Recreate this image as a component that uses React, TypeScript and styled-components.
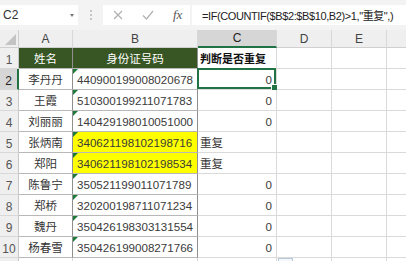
import React from "react";
import styled, { createGlobalStyle } from "styled-components";

const Global = createGlobalStyle`
  html, body { margin: 0; padding: 0; background: #ffffff; }
  body { font-family: "Noto Sans CJK SC", "Noto Sans", sans-serif; overflow: hidden; }
`;

const Page = styled.div`
  width: 406px;
  height: 261px;
  overflow: hidden;
  background: #ffffff;
  display: flex;
  flex-direction: column;
`;

const FormulaBar = styled.div`
  height: 30px;
  background: #f3f3f3;
  display: flex;
  align-items: flex-start;
  padding-top: 5px;
  box-sizing: border-box;
  flex-shrink: 0;
`;

const NameBox = styled.div`
  width: 78px;
  height: 20px;
  background: #ffffff;
  display: flex;
  align-items: center;
  justify-content: space-between;
  padding: 0 4px 0 3px;
  box-sizing: border-box;
  font-family: "Liberation Sans", sans-serif;
  font-size: 12px;
  color: #333;
`;

const Caret = styled.span`
  width: 0;
  height: 0;
  border-left: 2px solid transparent;
  border-right: 2px solid transparent;
  border-top: 3px solid #777;
`;

const Dots = styled.div`
  width: 25px;
  height: 20px;
  display: flex;
  flex-direction: column;
  align-items: center;
  justify-content: center;
  gap: 2px;
  & > span {
    width: 2px;
    height: 2px;
    background: #c4c4c4;
  }
`;

const IconBox = styled.div`
  width: 87px;
  height: 20px;
  background: #ffffff;
  display: flex;
  align-items: center;
  padding-left: 10px;
  gap: 19px;
  box-sizing: border-box;
`;

const Fx = styled.span`
  font-family: "Liberation Serif", serif;
  font-style: italic;
  font-size: 13px;
  color: #555;
`;

const FormulaText = styled.div`
  flex: 1;
  height: 20px;
  margin-left: 2px;
  background: #ffffff;
  display: flex;
  align-items: center;
  padding-left: 10px;
  font-family: "Liberation Sans", "Noto Sans CJK SC", sans-serif;
  font-size: 11px;
  letter-spacing: -0.4px;
  color: #222;
  white-space: nowrap;
  overflow: hidden;
`;

const Grid = styled.div`
  display: grid;
  grid-template-columns: 19px 54px 125px 79px 55px 55px 40px;
  grid-template-rows: 18px repeat(10, 21px) 20px;
`;

const ColHead = styled.div<{ $active?: boolean }>`
  background: ${(p) => (p.$active ? "#d6d6d6" : "#efefef")};
  border-right: 1px solid #d8d8d8;
  border-bottom: ${(p) => (p.$active ? "2px solid #217346" : "1px solid #d0d0d0")};
  box-sizing: border-box;
  display: flex;
  align-items: center;
  justify-content: center;
  font-family: "Liberation Sans", sans-serif;
  font-size: 12px;
  color: ${(p) => (p.$active ? "#222" : "#444")};
`;

const Corner = styled.div`
  background: #efefef;
  border-right: 1px solid #d0d0d0;
  border-bottom: 1px solid #d0d0d0;
  box-sizing: border-box;
  position: relative;
  &::after {
    content: "";
    position: absolute;
    right: 2px;
    bottom: 2px;
    width: 0;
    height: 0;
    border-left: 11px solid transparent;
    border-bottom: 11px solid #c3c3c3;
  }
`;

const RowHead = styled.div<{ $active?: boolean }>`
  background: ${(p) => (p.$active ? "#d6d6d6" : "#efefef")};
  border-right: ${(p) => (p.$active ? "2px solid #217346" : "1px solid #c8c8c8")};
  border-bottom: 1px solid #d8d8d8;
  box-sizing: border-box;
  display: flex;
  align-items: flex-end;
  justify-content: center;
  padding-bottom: 1px;
  font-family: "Liberation Sans", sans-serif;
  font-size: 12px;
  color: ${(p) => (p.$active ? "#222" : "#555")};
`;

const Cell = styled.div<{
  $bg?: string;
  $align?: "left" | "center" | "right";
  $table?: boolean;
  $bold?: boolean;
  $color?: string;
  $flag?: boolean;
  $pad?: number;
  $size?: number;
}>`
  position: relative;
  background: ${(p) => p.$bg || "#ffffff"};
  border-right: 1px solid ${(p) => (p.$table ? "#8f8f8f" : "#dadada")};
  border-bottom: 1px solid ${(p) => (p.$table ? "#b8b8b8" : "#dadada")};
  box-sizing: border-box;
  display: flex;
  align-items: center;
  justify-content: ${(p) =>
    p.$align === "center" ? "center" : p.$align === "right" ? "flex-end" : "flex-start"};
  padding: 0 4px 0 ${(p) => (p.$pad ?? 4)}px;
  font-size: ${(p) => p.$size ?? 11.5}px;
  font-weight: ${(p) => (p.$bold ? 700 : 400)};
  color: ${(p) => p.$color || "#333"};
  white-space: nowrap;
  overflow: visible;
  &::before {
    content: "";
    display: ${(p) => (p.$flag ? "block" : "none")};
    position: absolute;
    left: 0;
    top: 0;
    width: 0;
    height: 0;
    border-top: 5px solid #1f7a3a;
    border-right: 5px solid transparent;
  }
`;

const NumText = styled.span`
  font-family: "Liberation Sans", sans-serif;
  font-size: 11.6px;
  color: #3a3a3a;
`;

const Selected = styled.div`
  position: absolute;
  inset: -1px 0 0 -1px;
  border: 2px solid #217346;
  pointer-events: none;
  &::after {
    content: "";
    position: absolute;
    right: -4px;
    bottom: -4px;
    width: 5px;
    height: 5px;
    background: #217346;
    border: 1px solid #fff;
  }
`;

const Empty = styled.div`
  border-right: 1px solid #dadada;
  border-bottom: 1px solid #dadada;
  box-sizing: border-box;
  position: relative;
`;

const PasteIcon = styled.div`
  position: absolute;
  left: 1px;
  top: 0;
  width: 15px;
  height: 14px;
  border: 1px solid #b9c9d9;
  background: #f4f8fc;
  box-sizing: border-box;
`;

const rows = [
  { name: "李丹丹", id: "440900199008020678", c: "0" },
  { name: "王霞", id: "510300199211071783", c: "0" },
  { name: "刘丽丽", id: "140429198010051000", c: "0" },
  { name: "张炳南", id: "340621198102198716", c: "重复" },
  { name: "郑阳", id: "340621198102198534", c: "重复" },
  { name: "陈鲁宁", id: "350521199011071789", c: "0" },
  { name: "郑桥", id: "320200198711071234", c: "0" },
  { name: "魏丹", id: "350426198303131554", c: "0" },
  { name: "杨春雪", id: "350426199008271766", c: "0" },
];

const GREEN = "#375623";

export default function App() {
  return (
    <Page>
      <Global />
      <FormulaBar>
        <NameBox>
          <span>C2</span>
          <Caret />
        </NameBox>
        <Dots>
          <span />
          <span />
          <span />
        </Dots>
        <IconBox>
          <svg width="10" height="10" viewBox="0 0 10 10">
            <path d="M1 1 L9 9 M9 1 L1 9" stroke="#b0b0b0" strokeWidth="1.2" fill="none" />
          </svg>
          <svg width="12" height="10" viewBox="0 0 12 10">
            <path d="M1 5.5 L4.5 9 L11 1" stroke="#b0b0b0" strokeWidth="1.2" fill="none" />
          </svg>
          <Fx>fx</Fx>
        </IconBox>
        <FormulaText>=IF(COUNTIF($B$2:$B$10,B2)&gt;1,"重复",)</FormulaText>
      </FormulaBar>
      <Grid>
        <Corner />
        <ColHead>A</ColHead>
        <ColHead>B</ColHead>
        <ColHead $active>C</ColHead>
        <ColHead>D</ColHead>
        <ColHead>E</ColHead>
        <ColHead />

        <RowHead>1</RowHead>
        <Cell $bg={GREEN} $align="center" $table $color="#ffffff">
          姓名
        </Cell>
        <Cell $bg={GREEN} $align="center" $table $color="#ffffff">
          身份证号码
        </Cell>
        <Cell $bold $color="#111" $pad={2} $size={11}>
          判断是否重复
        </Cell>
        <Empty />
        <Empty />
        <Empty />

        {rows.map((r, i) => {
          const dup = r.c === "重复";
          return (
            <React.Fragment key={r.id}>
              <RowHead $active={i === 0}>{i + 2}</RowHead>
              <Cell $align="center" $table>
                {r.name}
              </Cell>
              <Cell $table $flag $bg={dup ? "#ffff00" : undefined}>
                <NumText>{r.id}</NumText>
              </Cell>
              <Cell $align={dup ? "left" : "right"} $pad={dup ? 2 : 4}>
                {dup ? r.c : <NumText>{r.c}</NumText>}
                {i === 0 && <Selected />}
              </Cell>
              <Empty />
              <Empty />
              <Empty />
            </React.Fragment>
          );
        })}

        <RowHead />
        <Empty />
        <Empty />
        <Empty />
        <Empty>
          <PasteIcon />
        </Empty>
        <Empty />
        <Empty />
      </Grid>
    </Page>
  );
}
